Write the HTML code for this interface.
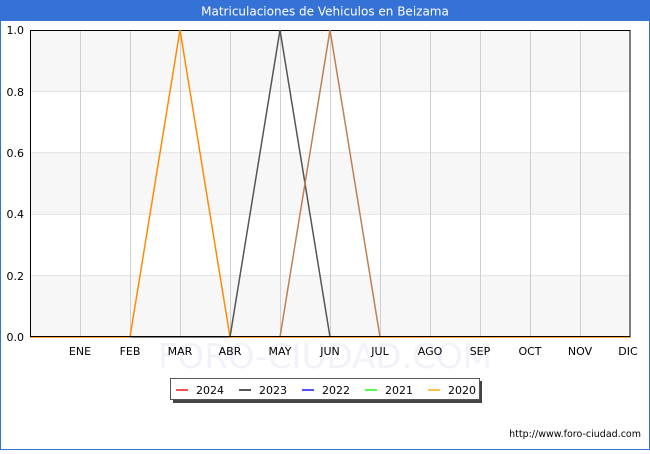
<!DOCTYPE html>
<html><head><style>
body{margin:0;width:650px;height:450px;overflow:hidden;background:#fff;font-family:"DejaVu Sans","Liberation Sans",sans-serif;}
</style></head><body>
<svg width="650" height="450" xmlns="http://www.w3.org/2000/svg" font-family="DejaVu Sans, Liberation Sans, sans-serif">
<rect x="0.5" y="0.5" width="649" height="449" fill="#fff" stroke="#3572d6"/>
<rect x="0" y="0" width="650" height="21" fill="#3572d6"/>
<text x="325" y="15.5" font-size="12" fill="#fff" text-anchor="middle">Matriculaciones de Vehiculos en Beizama</text>
<rect x="30" y="30" width="600" height="61.4" fill="#f7f7f7"/>
<rect x="30" y="152.8" width="600" height="61.4" fill="#f7f7f7"/>
<rect x="30" y="275.6" width="600" height="61.4" fill="#f7f7f7"/>
<g stroke="#e2e2e2"><line x1="30" x2="630" y1="91.4" y2="91.4"/><line x1="30" x2="630" y1="152.8" y2="152.8"/><line x1="30" x2="630" y1="214.2" y2="214.2"/><line x1="30" x2="630" y1="275.6" y2="275.6"/></g>
<g stroke="#cfcfcf">
<line x1="80.5" x2="80.5" y1="30" y2="337"/><line x1="130.5" x2="130.5" y1="30" y2="337"/><line x1="180.5" x2="180.5" y1="30" y2="337"/><line x1="230.5" x2="230.5" y1="30" y2="337"/><line x1="280.5" x2="280.5" y1="30" y2="337"/><line x1="330.5" x2="330.5" y1="30" y2="337"/><line x1="380.5" x2="380.5" y1="30" y2="337"/><line x1="430.5" x2="430.5" y1="30" y2="337"/><line x1="480.5" x2="480.5" y1="30" y2="337"/><line x1="530.5" x2="530.5" y1="30" y2="337"/><line x1="580.5" x2="580.5" y1="30" y2="337"/></g>
<text x="325" y="368" font-size="34" fill="#f1f2fa" text-anchor="middle">FORO-CIUDAD.COM</text>
<rect x="30.5" y="30.5" width="599.5" height="306.5" fill="none" stroke="#000"/>
<polyline points="30,337 130,337 180,30 230,337 630,337" fill="none" stroke="#ff8c00" stroke-width="1.5"/>
<polyline points="230,337 280,30 330,337" fill="none" stroke="#555" stroke-width="1.5"/>
<polyline points="280,337 330,30 380,337" fill="none" stroke="#c08050" stroke-width="1.5"/>
<line x1="30" x2="630" y1="336.5" y2="336.5" stroke="#000"/>
<g font-size="11" fill="#000" text-anchor="end">
<text x="24" y="34">1.0</text><text x="24" y="96">0.8</text><text x="24" y="157">0.6</text><text x="24" y="218">0.4</text><text x="24" y="280">0.2</text><text x="24" y="341">0.0</text></g>
<g font-size="11" fill="#000" text-anchor="middle">
<text x="80" y="355">ENE</text><text x="130" y="355">FEB</text><text x="180" y="355">MAR</text><text x="230" y="355">ABR</text><text x="280" y="355">MAY</text><text x="330" y="355">JUN</text><text x="380" y="355">JUL</text><text x="430" y="355">AGO</text><text x="480" y="355">SEP</text><text x="530" y="355">OCT</text><text x="580" y="355">NOV</text><text x="628" y="355">DIC</text></g>
<rect x="173" y="381" width="309" height="22" fill="#444"/>
<rect x="170.5" y="378.5" width="309" height="21" fill="#fff" stroke="#555"/>
<g stroke-width="2"><line x1="176" x2="188" y1="390" y2="390" stroke="#ff5050"/><line x1="239" x2="251" y1="390" y2="390" stroke="#555"/><line x1="302" x2="314" y1="390" y2="390" stroke="#5050ff"/><line x1="365" x2="377" y1="390" y2="390" stroke="#50ff50"/><line x1="428" x2="440" y1="390" y2="390" stroke="#ffc050"/></g>
<g font-size="11" fill="#000"><text x="196" y="394">2024</text><text x="259" y="394">2023</text><text x="322" y="394">2022</text><text x="385" y="394">2021</text><text x="448" y="394">2020</text></g>
<text x="641" y="437" font-size="9.5" fill="#000" text-anchor="end">http://www.foro-ciudad.com</text>
</svg>
</body></html>
